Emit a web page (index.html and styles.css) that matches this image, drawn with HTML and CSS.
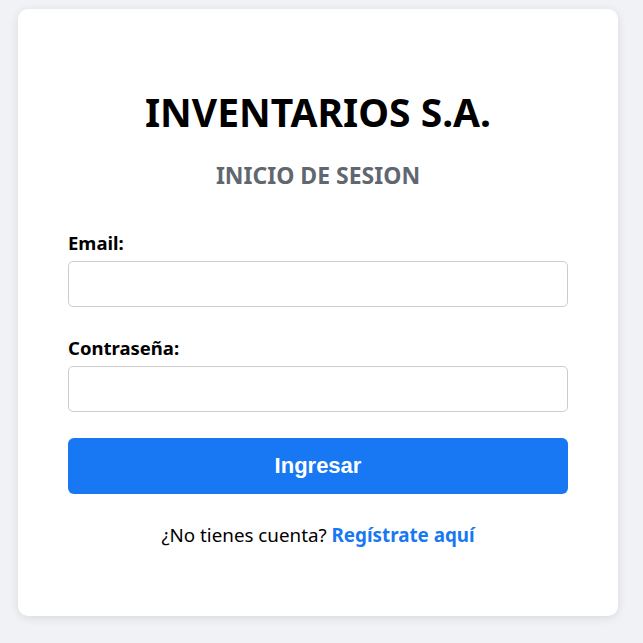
FILE: index.html
```html
<!DOCTYPE html>
<html lang="es">
<head>
<meta charset="utf-8">
<title>Inicio de sesión</title>
<link rel="stylesheet" href="styles.css">
</head>
<body>
<main class="card">
  <h1 class="title">INVENTARIOS S.A.</h1>
  <h2 class="subtitle">INICIO DE SESION</h2>
  <form class="form">
    <div class="field">
      <label class="label" for="email">Email:</label>
      <input class="input" id="email" type="email">
    </div>
    <div class="field">
      <label class="label" for="pass">Contraseña:</label>
      <input class="input" id="pass" type="password">
    </div>
    <button class="button" type="button">Ingresar</button>
  </form>
  <p class="footer">¿No tienes cuenta? <a class="link" href="#">Regístrate aquí</a></p>
</main>
</body>
</html>
```
FILE: styles.css
```css
* { box-sizing: border-box; }
html, body { margin: 0; }
body {
  background: #f0f2f5;
  font-family: "Noto Sans", "Open Sans", sans-serif;
  padding: 9px 25px 28px 18px;
  min-height: 643px;
}
.card {
  width: 600px;
  background: #fff;
  border-radius: 10px;
  box-shadow: 0 2px 10px rgba(0, 0, 0, 0.1);
  padding: 79px 50px 70px;
}
.title {
  margin: 0;
  font-size: 39px;
  line-height: 48px;
  font-weight: 700;
  text-align: center;
  color: #000;
}
.subtitle {
  margin: 25px 0 0;
  font-size: 23px;
  line-height: 28px;
  font-weight: 700;
  text-align: center;
  color: #606770;
}
.form {
  margin-top: 43px;
  display: flex;
  flex-direction: column;
}
.field {
  display: flex;
  flex-direction: column;
  gap: 7px;
  margin-bottom: 30px;
}
.field + .field { margin-bottom: 26px; }
.label {
  font-size: 18.5px;
  line-height: 22px;
  font-weight: 700;
  color: #000;
}
.input {
  height: 46px;
  width: 100%;
  border: 1px solid #ccc;
  border-radius: 5px;
  padding: 0 12px;
  font-size: 16px;
  background: #fff;
}
.button {
  height: 56px;
  border: none;
  border-radius: 6px;
  background: #1877f2;
  color: #fff;
  font-family: "Liberation Sans", Arial, sans-serif;
  font-size: 22px;
  font-weight: 700;
}
.footer {
  margin: 30px 0 0;
  font-size: 18.8px;
  line-height: 22px;
  text-align: center;
  color: #000;
}
.link {
  color: #1877f2;
  font-weight: 700;
  text-decoration: none;
}
```
